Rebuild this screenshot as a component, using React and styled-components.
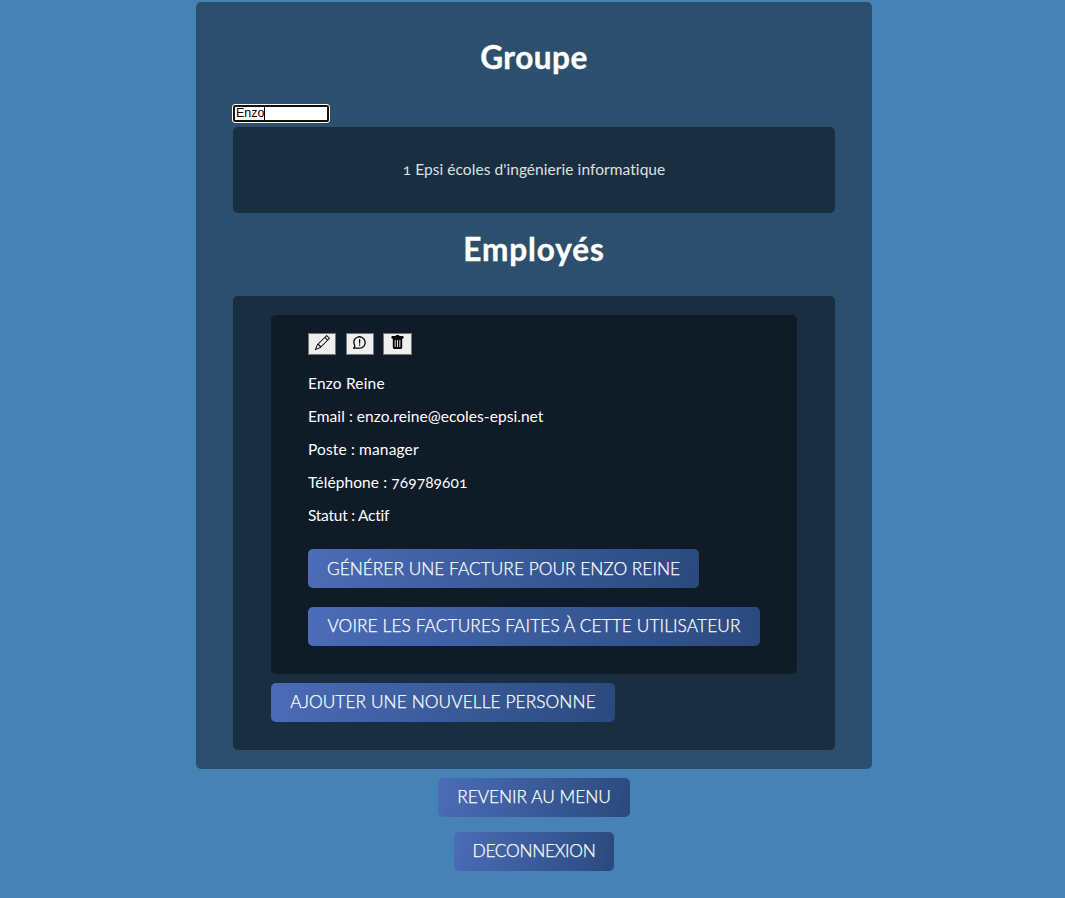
import React from "react";
import styled, { createGlobalStyle } from "styled-components";
import { BsPencil, BsTrashFill } from "react-icons/bs";

const Global = createGlobalStyle`
  * { box-sizing: border-box; }
  body {
    margin: 0;
    min-height: 100vh;
    background: #4682b4;
    color: #fff;
    font: 400 15.5px/33px Lato, "Open Sans", sans-serif;
    font-variant-numeric: oldstyle-nums;
    font-variant-ligatures: none;
  }
`;
const Page = styled.div`
  display: flex;
  flex-direction: column;
  align-items: center;
  padding: 2px 193px 27px 196px;
`;
const Panel = styled.main`
  display: flex;
  flex-direction: column;
  width: 676px;
  height: 767px;
  padding: 35px 37px 19px;
  border-radius: 5px;
  background: #2b4f6c;
`;
const Title = styled.h1`
  margin: 0;
  font-size: 31.5px;
  font-weight: 700;
  line-height: 40px;
  text-align: center;
  letter-spacing: ${(p) => p.$track || 0}px;
  -webkit-text-stroke: 0.4px #fff;
`;
const SearchField = styled.div`
  position: relative;
  display: flex;
  width: 96px;
  margin: 28px 0 5px;
  &::after {
    content: "";
    position: absolute;
    left: 31px;
    top: 2px;
    width: 1px;
    height: 13px;
    background: #000;
  }
`;
const Search = styled.input`
  width: 96px;
  height: 17px;
  padding: 0 1px 1px;
  border: 2px solid #101010;
  border-radius: 2px;
  outline: 1px solid #fff;
  background: #fff;
  color: #000;
  font: 12.5px/13px "Liberation Sans", Arial, sans-serif;
`;
const Group = styled.section`
  height: 86px;
  margin-bottom: 16px;
  border-radius: 5px;
  background: #1a2e42;
  color: #dde0e3;
  line-height: 85px;
  text-align: center;
  letter-spacing: 0.06px;
`;
const Team = styled.section`
  height: 454px;
  margin-top: 27px;
  padding: 19px 38px;
  border-radius: 5px;
  background: #1a2e42;
`;
const Card = styled.article`
  height: 359px;
  margin-bottom: 9px;
  padding: 18px 37px;
  border-radius: 5px;
  background: #0f1b26;
`;
const Actions = styled.div`
  display: flex;
  gap: 10px;
  margin-bottom: 12px;
`;
const IconButton = styled.button`
  display: flex;
  justify-content: center;
  width: 28px;
  height: 22px;
  padding: 1px 0 0;
  border: 1px solid #767676;
  background: #efefef;
  color: #000;
  font-size: 15px;
  &:nth-child(2) { padding-right: 2px; }
  &:last-child { width: 29px; margin-left: -1px; padding-right: 1px; }
`;
const Line = styled.p`
  margin: 0;
  height: 33px;
  letter-spacing: ${(p) => p.$track || 0}px;
  white-space: nowrap;
`;
const Button = styled.button`
  display: block;
  width: ${(p) => p.$width}px;
  height: 39px;
  margin: ${(p) => p.$top || 0}px 0 0;
  padding: 0 0 ${(p) => (p.$raised ? 2 : 0)}px;
  border: 0;
  border-radius: 5px;
  background: linear-gradient(100deg, #4b6cb7, #2a4a7e);
  color: #fff;
  font: 300 17.3px/37px Lato, "Open Sans", sans-serif;
  letter-spacing: ${(p) => p.$track || 0}px;
  text-transform: uppercase;
  white-space: nowrap;
  -webkit-text-stroke: 0.25px #fff;
`;

const MessageAlert = () => (
  <svg width="15" height="15" viewBox="0 0 15 15" fill="none" stroke="currentColor" strokeWidth="1.3" strokeLinecap="round" strokeLinejoin="round">
    <path d="M1.6 13.2h6A5.7 5.7 0 1 0 2.7 10.6c.1 1-.3 1.9-1.1 2.6Z" />
    <path d="M7.6 4.7v3.3M7.6 10v.2" />
  </svg>
);

export default function App() {
  return (
    <>
      <Global />
      <Page>
        <Panel>
          <Title $track={0.5}>Groupe</Title>
          <SearchField>
            <Search defaultValue="Enzo" />
          </SearchField>
          <Group>1 Epsi écoles d'ingénierie informatique</Group>
          <Title $track={0.9}>Employés</Title>
          <Team>
            <Card>
              <Actions>
                <IconButton aria-label="Modifier"><BsPencil /></IconButton>
                <IconButton aria-label="Signaler"><MessageAlert /></IconButton>
                <IconButton aria-label="Supprimer"><BsTrashFill /></IconButton>
              </Actions>
              <Line $track={0.18}>Enzo Reine</Line>
              <Line $track={0.06}>Email : enzo.reine@ecoles-epsi.net</Line>
              <Line $track={0.15}>Poste : manager</Line>
              <Line $track={0.1}>Téléphone : 769789601</Line>
              <Line $track={-0.25}>Statut : Actif</Line>
              <Button $width={391} $top={17} $track={0.03}>Générer une facture pour Enzo Reine</Button>
              <Button $width={452} $top={19} $track={0.11} $raised>Voire les factures faites à cette utilisateur</Button>
            </Card>
            <Button $width={344} $track={0.1} $raised>Ajouter une nouvelle personne</Button>
          </Team>
        </Panel>
        <Button $width={192} $top={9} $track={0} $raised>Revenir au menu</Button>
        <Button $width={160} $top={15} $track={-0.3} $raised>Deconnexion</Button>
      </Page>
    </>
  );
}
